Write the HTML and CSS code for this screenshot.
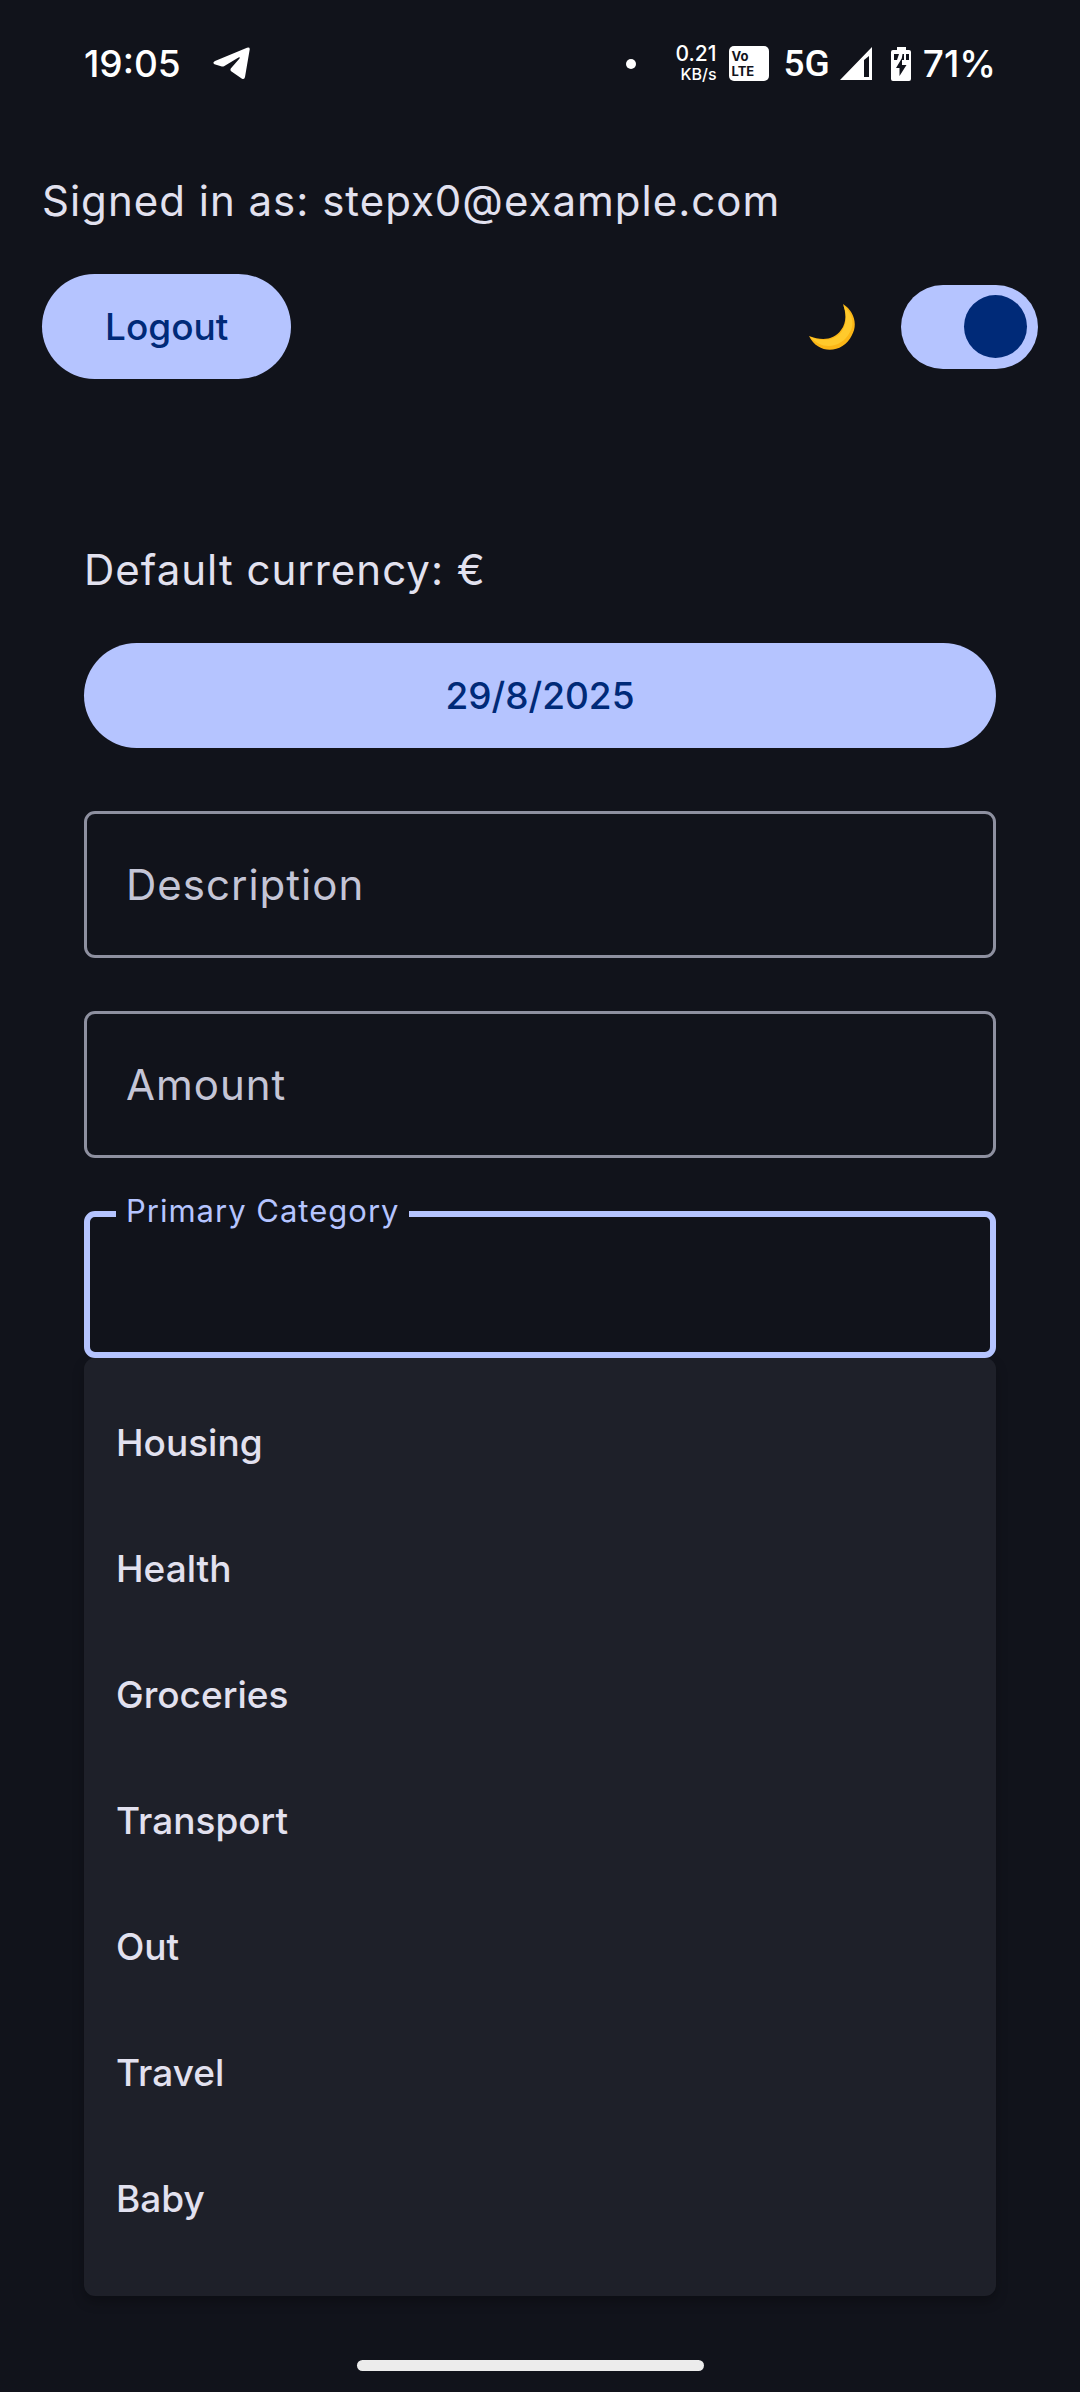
FILE: index.html
```html
<!DOCTYPE html>
<html lang="en">
<head>
<meta charset="utf-8">
<meta name="viewport" content="width=device-width, initial-scale=1">
<title>Expenses</title>
<link rel="stylesheet" href="styles.css">
</head>
<body>
<header class="status">
  <span class="status-time">19:05</span>
  <svg class="telegram" viewBox="0 0 37 33" aria-hidden="true"><path d="M2 14 34 .8q3-.9 2.700 1.700L32 30q-.6 3-3 1.700L18.500 24.500q-2-1.600-.3-3.500L26.500 11.500q1-1.700-1-.9L11 19.200q-1.200.6-3 .1L1.500 17.300q-2.500-1.500.5-3.300Z" fill="#fff"/></svg>
  <span class="status-dot"></span>
  <span class="speed"><span class="speed-value">0.21</span><span class="speed-unit">KB/s</span></span>
  <span class="volte"><span>Vo</span><span>LTE</span></span>
  <span class="network">5G</span>
  <svg class="signal" viewBox="0 0 32 33" aria-hidden="true"><path fill="#fff" fill-rule="evenodd" d="M32 0V33H0ZM24 13V30H29V9Z"/></svg>
  <svg class="battery" viewBox="0 0 20 34" aria-hidden="true"><path fill="#fff" d="M6 0h9v3h3q2 0 2 2v27q0 2-2 2H2q-2 0-2-2V5q0-2 2-2h4Z"/><path fill="#11131b" d="M3 7h5L6 13H3ZM11.500 7h1.500v6h-2.500ZM15 7h3v6h-3ZM11 11v7h4.500L8.500 29V21H5Z"/></svg>
  <span class="status-percent">71%</span>
</header>

<section class="account">
  <p class="body-text">Signed in as: stepx0@example.com</p>
  <div class="account-row">
    <button class="btn" type="button">Logout</button>
    <div class="theme">
      <svg class="moon" viewBox="0 0 46 46" aria-hidden="true"><path d="M34 0C45 7 49 20 43 31 34 50 9 51 0 32 13 37 25 36 32 26 38 18 37 9 34 0Z" fill="#fbb616"/><path d="M34.500 1.500C43 9 46 19 41 28 33 44 13 47 1.500 33 14 38 26 37 33 27 38 20 38 10 34.500 1.500Z" fill="#ffca2c"/></svg>
      <input class="switch" type="checkbox" role="switch" aria-label="Dark theme" checked>
    </div>
  </div>
</section>

<main class="form">
  <p class="body-text">Default currency: €</p>
  <button class="btn btn-date" type="button">29/8/2025</button>
  <div class="fields">
    <div class="field">
      <input class="field-input" id="description" type="text">
      <label class="field-label" for="description">Description</label>
    </div>
    <div class="field">
      <input class="field-input" id="amount" type="text" inputmode="decimal">
      <label class="field-label" for="amount">Amount</label>
    </div>
    <div class="field field-active">
      <input class="field-input" id="category" type="text" role="combobox" aria-expanded="true" aria-controls="category-menu">
      <label class="field-label" for="category">Primary Category</label>
    </div>
  </div>
  <div class="menu" id="category-menu">
    <button class="menu-item" type="button">Housing</button>
    <button class="menu-item" type="button">Health</button>
    <button class="menu-item" type="button">Groceries</button>
    <button class="menu-item" type="button">Transport</button>
    <button class="menu-item" type="button">Out</button>
    <button class="menu-item" type="button">Travel</button>
    <button class="menu-item" type="button">Baby</button>
  </div>
</main>

<footer class="nav"><span class="nav-handle"></span></footer>
</body>
</html>
```
FILE: styles.css
```css
:root {
  --surface: #11131b;
  --menu: #1e2029;
  --primary: #b5c4ff;
  --on-primary: #002a78;
  --text: #e2e1ef;
  --text-muted: #c4c5d6;
  --outline: #8e90a0;
}

* { box-sizing: border-box; }

body {
  margin: 0;
  min-height: 100vh;
  display: flex;
  flex-direction: column;
  background: var(--surface);
  color: var(--text);
  font-family: Inter, "Liberation Sans", sans-serif;
  font-size: 42px;
  line-height: 63px;
}

p { margin: 0; }

button, input { font: inherit; }

.status {
  display: flex;
  align-items: center;
  height: 127px;
  padding: 0 84px;
  color: #fff;
  font-size: 37px;
  font-weight: 500;
}

.telegram { width: 37px; height: 33px; margin-left: 32px; }

.status-dot {
  width: 10px;
  height: 10px;
  margin-left: auto;
  border-radius: 50%;
  background: #fff;
}

.speed {
  display: flex;
  flex-direction: column;
  align-items: flex-end;
  margin-left: 40px;
  line-height: 21px;
}

.speed-value { font-size: 21px; }
.speed-unit { font-size: 16px; }

.volte {
  display: flex;
  flex-direction: column;
  width: 40px;
  height: 35px;
  margin-left: 12px;
  padding: 3px;
  border-radius: 5px;
  background: #fff;
  color: #11131b;
  font-size: 13px;
  font-weight: 700;
  line-height: 15px;
}

.network { margin-left: 15px; font-family: Roboto, sans-serif; }
.signal { width: 32px; height: 33px; margin-left: 10px; }
.battery { width: 20px; height: 34px; margin-left: 19px; }
.status-percent { margin-left: 12px; }

.body-text { letter-spacing: 1px; }

.account {
  display: flex;
  flex-direction: column;
  gap: 42px;
  padding: 42px;
}

.account-row, .theme {
  display: flex;
  align-items: center;
  justify-content: space-between;
}

.theme { gap: 46px; }
.moon { width: 46px; height: 46px; }

.btn {
  height: 105px;
  padding: 0 63px;
  border: 0;
  border-radius: 53px;
  background: var(--primary);
  color: var(--on-primary);
  font-size: 37px;
  font-weight: 500;
}

.switch {
  appearance: none;
  display: flex;
  align-items: center;
  justify-content: flex-end;
  width: 137px;
  height: 84px;
  margin: 0;
  padding: 11px;
  border-radius: 42px;
  background: var(--primary);
}

.switch::before {
  content: "";
  width: 63px;
  height: 63px;
  border-radius: 50%;
  background: var(--on-primary);
}

.form {
  display: flex;
  flex-direction: column;
  padding: 117px 84px 0;
}

.btn-date { margin-top: 42px; }

.fields {
  display: grid;
  gap: 53px;
  margin-top: 63px;
}

.field { position: relative; display: grid; }

.field-input {
  width: 100%;
  height: 147px;
  padding: 0 42px;
  border: 3px solid var(--outline);
  border-radius: 11px;
  outline: 0;
  background: transparent;
  color: var(--text);
}

.field-input, .field-label { grid-area: 1 / 1; }

.field-label {
  align-self: center;
  justify-self: start;
  margin-left: 42px;
  color: var(--text-muted);
  letter-spacing: 1px;
  pointer-events: none;
}

.field-active .field-input { border: 6px solid var(--primary); }

.field-active .field-label {
  position: absolute;
  top: -21px;
  left: 32px;
  margin: 0;
  padding: 0 10px;
  background: var(--surface);
  color: var(--primary);
  font-size: 31px;
  line-height: 42px;
}

.menu {
  display: flex;
  flex-direction: column;
  padding: 21px 0 35px;
  border-radius: 11px;
  background: var(--menu);
  box-shadow: 0 6px 12px rgba(0, 0, 0, .25);
}

.menu-item {
  height: 126px;
  padding: 0 32px;
  border: 0;
  background: transparent;
  color: var(--text);
  font-size: 37px;
  font-weight: 500;
  text-align: left;
}

.nav {
  display: flex;
  justify-content: center;
  margin-top: auto;
  padding: 21px 19px 21px 0;
}

.nav-handle {
  width: 347px;
  height: 11px;
  border-radius: 6px;
  background: #ececec;
}
```
